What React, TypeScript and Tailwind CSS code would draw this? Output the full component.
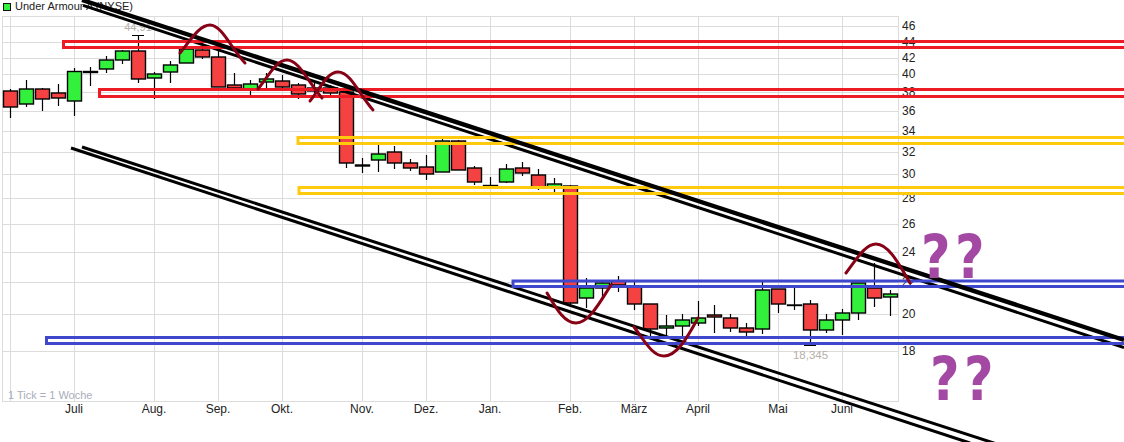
const GRID = "#dcdcdc";
const RED = "#f44242";
const GREEN = "#33f03c";

// x, wick top, wick bottom, body top, body bottom, up?
const candles: [number, number, number, number, number, boolean][] = [
  [10, 89, 118, 91, 107, false],
  [26, 80, 107, 89, 104, true],
  [42, 88, 111, 89, 99, false],
  [58, 84, 106, 93, 98, false],
  [74, 68, 116, 71.5, 101, true],
  [90, 67, 86, 71.5, 72.5, true],
  [106, 56, 73, 60, 69, true],
  [122, 50, 64, 51, 60, true],
  [138, 35, 83, 51, 79, false],
  [154, 72, 99, 74, 78, true],
  [170, 61, 83, 65, 72, true],
  [186, 47, 63, 49, 63, true],
  [202, 42, 59, 50, 57, false],
  [218, 47, 87, 57, 87, false],
  [234, 73, 90, 85, 88, false],
  [250, 80, 95, 84, 89, true],
  [266, 73, 88, 79, 82, true],
  [282, 75, 88, 81, 87, false],
  [298, 83, 99, 85, 94, false],
  [314, 83, 94, 88, 91, true],
  [330, 85, 95, 88, 93, false],
  [346, 91, 168, 92, 163, false],
  [362, 158, 173, 165, 166, true],
  [378, 145, 172, 154, 160, true],
  [394, 146, 169, 152, 163, false],
  [410, 159, 171, 163, 168, false],
  [426, 155, 180, 167, 174, false],
  [442, 139, 172, 141, 172, true],
  [458, 140, 170, 141, 170, false],
  [474, 166, 185, 168, 182, false],
  [490, 177, 186, 185.5, 186, true],
  [506, 164, 183, 169, 182, true],
  [522, 162, 176, 168, 173, false],
  [538, 169, 190, 175, 187, false],
  [554, 178, 192, 184, 188, true],
  [570, 185, 304, 186, 303, false],
  [586, 278, 308, 288, 298, true],
  [602, 280, 297, 283, 288, true],
  [618, 276, 292, 281, 285, false],
  [634, 280, 310, 287, 304, false],
  [650, 304, 337, 304, 329, false],
  [666, 315, 337, 326, 328, true],
  [682, 314, 337, 320, 326, true],
  [698, 301, 326, 318, 323, true],
  [714, 305, 333, 315, 317, false],
  [730, 314, 332, 318, 328, false],
  [746, 323, 336, 328, 332, false],
  [762, 282, 334, 290, 329, true],
  [778, 289, 313, 289, 304, false],
  [794, 287, 310, 305, 305.5, true],
  [810, 300, 345, 304, 330, false],
  [826, 314, 333, 320, 330, true],
  [842, 309, 335, 313, 320, true],
  [858, 283, 320, 283, 313, true],
  [874, 263, 307, 288, 298, false],
  [890, 290, 316, 294, 297, true],
];

const priceTicks: [string, number][] = [
  ["46", 26], ["44", 42], ["42", 58], ["40", 74], ["38", 92], ["36", 111], ["34", 131], ["32", 152],
  ["30", 174], ["28", 198], ["26", 224], ["24", 252], ["22", 282], ["20", 314], ["18", 351],
];

const monthTicks: [string, number][] = [
  ["Juli", 74], ["Aug.", 154], ["Sep.", 218], ["Okt.", 282], ["Nov.", 362], ["Dez.", 426],
  ["Jan.", 490], ["Feb.", 570], ["März", 634], ["April", 698], ["Mai", 778], ["Juni", 842],
];

// hand-drawn zones: left edge, top line, bottom line, colour
const zones: [number, number, number, string][] = [
  [63.5, 41.5, 47.5, "#ed1c24"],
  [99.5, 89.5, 96.5, "#ed1c24"],
  [298, 137.5, 143.5, "#ffc90e"],
  [299, 187.5, 193.5, "#ffc90e"],
  [513, 281, 286.5, "#3f48cc"],
  [46.5, 337.5, 343.5, "#3f48cc"],
];

// these run under the zones, the thick one over them
const thinLines: [number, number, number, number][] = [
  [83, 5.4, 1124, 347.5],
  [82, 147, 1000, 445],
  [71, 148, 970, 443],
];

const arcs = [
  "M180 53C192 38 200 25 210 25C222 25 232 50 245 63",
  "M258 89C268 77 276 60 287 60C299 60 308 82 322 98",
  "M310 101C320 89 327 72 338 72C351 72 360 96 373 110",
  "M547 293C556 308 564 323 576 323C589 323 600 302 611 285",
  "M634 327C644 340 652 356 664 356C678 356 689 334 698 318",
  "M846 273C856 260 865 244 876 244C889 244 900 266 910 283",
];

const marks: [number, number][] = [
  [921, 278],
  [955, 278],
  [930, 400],
  [964, 400],
];

export default function App() {
  return (
    <div className="w-[1124px] h-[442px] bg-white overflow-hidden">
      <svg width="1124" height="442" viewBox="0 0 1124 442" className="block font-['Liberation_Sans',Arial,sans-serif]">
        <rect x="3.5" y="3.5" width="7" height="7" fill={GREEN} stroke="#111" />
        <text x="15" y="10" fontSize="11" fill="#222">Under Armour A (NYSE)</text>

        <rect x="2.5" y="16.5" width="896" height="385" fill="none" stroke={GRID} />
        {priceTicks.map(([, y]) => (
          <line key={y} x1="2.5" x2="898" y1={y + 0.5} y2={y + 0.5} stroke={GRID} />
        ))}
        {[{ x: 10 }, ...monthTicks.map(([, x]) => ({ x }))].map(({ x }) => (
          <line key={x} x1={x + 0.5} x2={x + 0.5} y1="16" y2="402" stroke={GRID} />
        ))}

        {candles.map(([x, wt, wb, bt, bb, up]) => (
          <g key={x}>
            <line x1={x + 0.5} x2={x + 0.5} y1={wt} y2={wb} stroke="#000" strokeWidth="1.2" />
            <rect x={x - 6.5} y={bt} width="14" height={bb - bt} fill={up ? GREEN : RED} stroke="#000" strokeWidth="1.4" />
          </g>
        ))}
        <line x1="132" x2="144" y1="35.5" y2="35.5" stroke="#000" />
        <line x1="804" x2="816" y1="345.5" y2="345.5" stroke="#000" />

        {priceTicks.map(([label, y]) => (
          <text key={label} x="902" y={y + 4} fontSize="12" fill="#222">{label}</text>
        ))}
        {monthTicks.map(([label, x]) => (
          <text key={label} x={x} y="413" fontSize="12" fill="#222" textAnchor="middle">{label}</text>
        ))}
        <text x="138" y="31" fontSize="11" fill="#b5b0a8" textAnchor="middle">44,91</text>
        <text x="810.5" y="359" fontSize="11.5" fill="#b5b0a8" textAnchor="middle">18,345</text>
        <text x="8" y="399" fontSize="11" fill="#a9adbb">1 Tick = 1 Woche</text>

        {thinLines.map(([x1, y1, x2, y2]) => (
          <line key={x1 + y1} x1={x1} y1={y1} x2={x2} y2={y2} stroke="#000" strokeWidth="3" />
        ))}
        {zones.map(([x, top, bottom, color]) => (
          <rect key={top} x={x} y={top} width="1130" height={bottom - top} fill="none" stroke={color} strokeWidth="3" />
        ))}
        <line x1="82" y1="0" x2="1124" y2="340" stroke="#000" strokeWidth="4.4" />
        {arcs.map((d) => (
          <path key={d} d={d} fill="none" stroke="#880015" strokeWidth="3" strokeLinecap="round" />
        ))}

        <g fontSize="60" fontWeight="700" fill="#a349a4" className="font-['DejaVu_Sans',sans-serif]">
          {marks.map(([x, y]) => (
            <text key={x} transform={`translate(${x} ${y}) scale(0.85 1)`}>?</text>
          ))}
        </g>
      </svg>
    </div>
  );
}
